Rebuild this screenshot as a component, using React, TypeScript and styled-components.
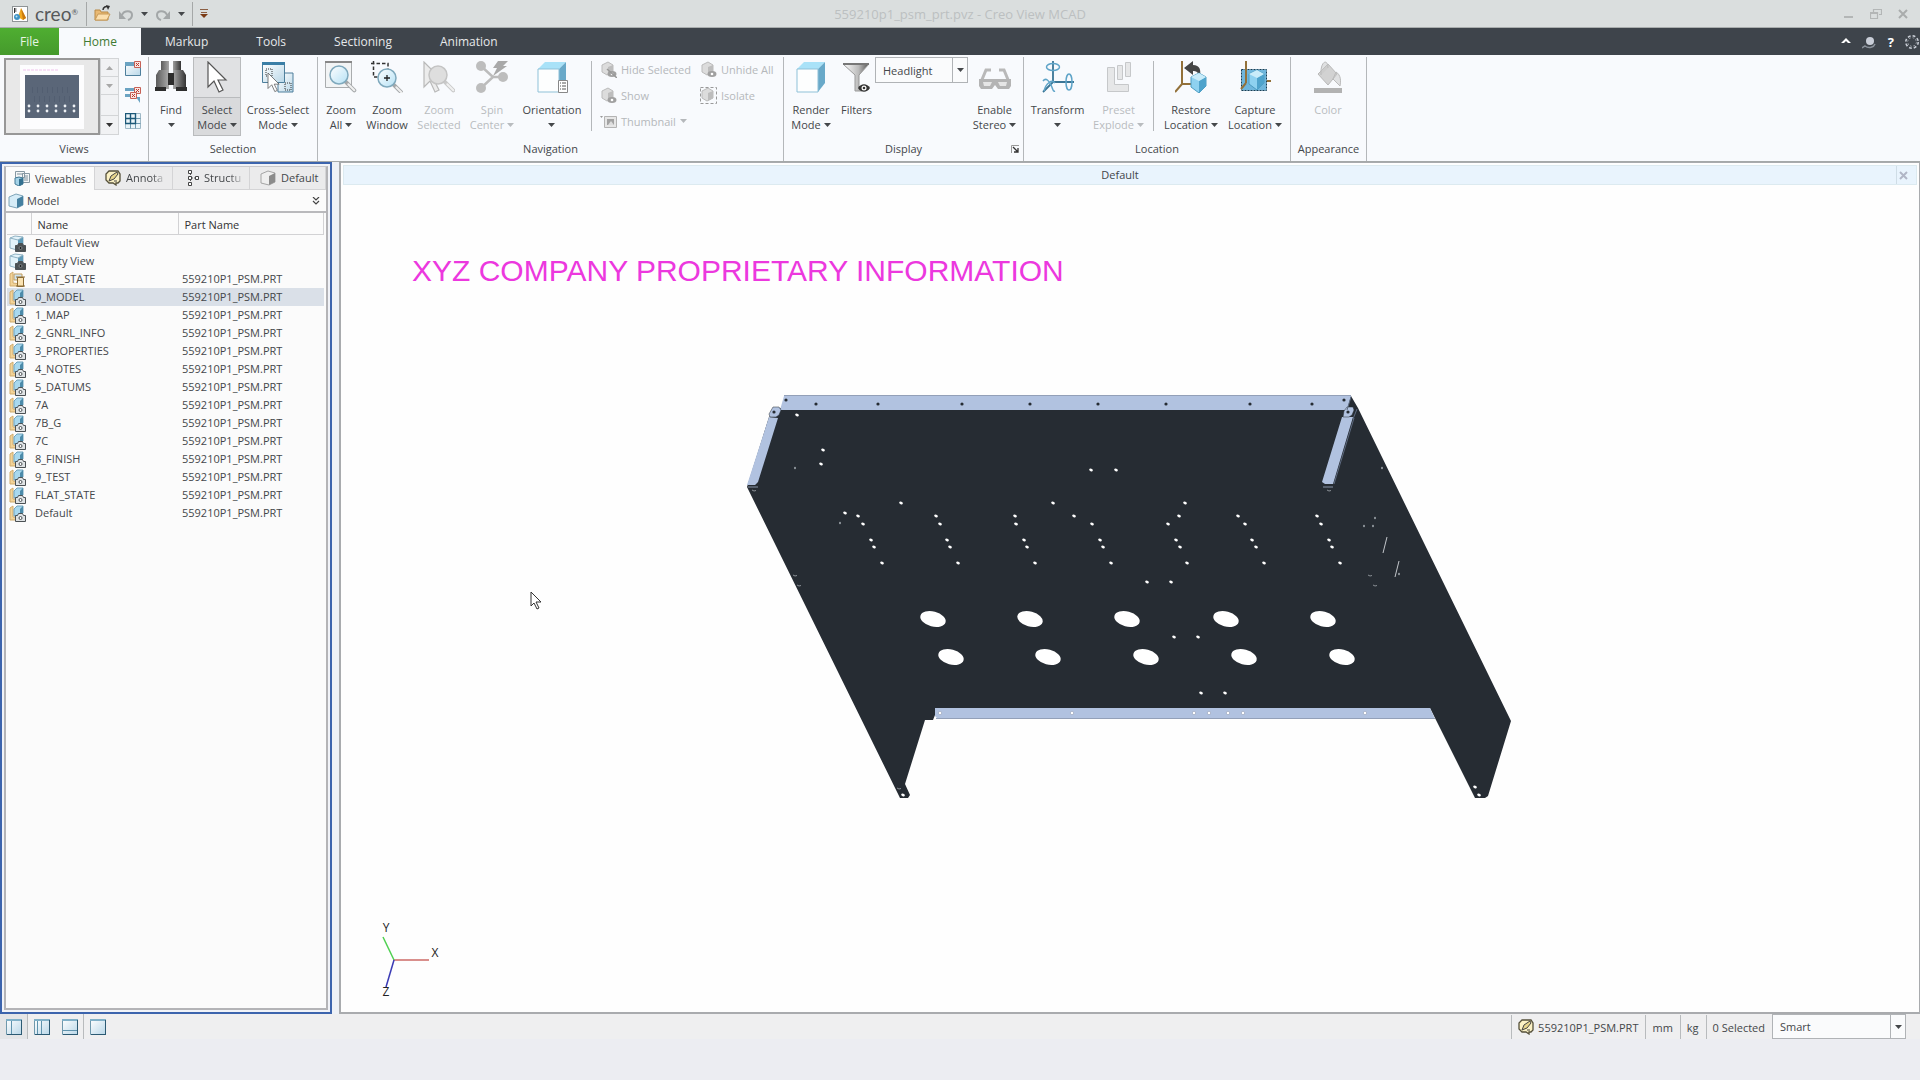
import React, { ReactNode } from "react";
import styled, { createGlobalStyle, css } from "styled-components";

const GlobalStyle = createGlobalStyle`
  *, *::before, *::after { box-sizing: border-box; }
  body { margin: 0; background: #ecedf2; }
  body, button, select { font-family: "Open Sans", "Noto Sans", sans-serif; font-size: 11px; color: #44474a; }
  button { border: 0; background: none; padding: 0; margin: 0; }
  svg { display: block; flex: none; }
`;

const Shell = styled.div`
  min-height: 100vh;
  display: flex;
  flex-direction: column;
  padding-bottom: 41px;
  background: #ecedf2;
`;

/* ---------- title bar ---------- */

const TitleBar = styled.header`
  display: grid;
  grid-template-columns: 1fr auto 1fr;
  align-items: center;
  height: 28px;
  background: #dadede;
  border-bottom: 1px solid #a9adad;
`;
const QuickAccess = styled.div`
  display: flex;
  align-items: center;
  gap: 7px;
  padding-left: 12px;
`;
const Brand = styled.span`
  font-family: "Lato", sans-serif;
  font-size: 19px;
  line-height: 22px;
  color: #56595b;
  width: 44px;
  sup { font-size: 8px; line-height: 8px; vertical-align: 6px; }
`;
const BarRule = styled.span`
  width: 1px;
  height: 24px;
  background: #a5a8a8;
`;
const WindowTitle = styled.div`
  font-size: 13px;
  color: #bcc0c1;
`;
const WindowButtons = styled.div`
  display: flex;
  justify-content: flex-end;
  gap: 15px;
  padding-right: 11px;
  color: #adb0b0;
`;

/* ---------- tab bar ---------- */

const TabBar = styled.nav`
  display: flex;
  align-items: stretch;
  justify-content: space-between;
  height: 27px;
  background: #3e444b;
`;
const TabList = styled.div`
  display: flex;
`;
const RibbonTab = styled.button<{ $kind?: "file" | "active" }>`
  padding: 0 24px;
  font-size: 12px;
  line-height: 26px;
  color: #e6e8ea;
  ${(p) => p.$kind === "file" && css`
    padding: 0 20px;
    color: #e8f5e4;
    background: linear-gradient(#4fae31, #459a2c);
  `}
  ${(p) => p.$kind === "active" && css`
    color: #3f7a33;
    background: #f8fafd;
  `}
`;
const TabTools = styled.div`
  display: flex;
  align-items: center;
  gap: 10px;
  color: #fff;
  b { font-size: 13px; line-height: 20px; }
`;

/* ---------- ribbon ---------- */

const Ribbon = styled.section`
  display: flex;
  background: #f8fafd;
  padding-top: 2px;
  height: 106px;
`;
const Group = styled.div<{ $width: number }>`
  width: ${(p) => p.$width}px;
  display: flex;
  flex-direction: column;
  border-right: 1px solid #b4b7ba;
`;
const GroupBody = styled.div`
  display: flex;
  height: 79px;
`;
const GroupTitle = styled.div`
  display: flex;
  justify-content: center;
  align-items: center;
  flex: 1;
  position: relative;
`;
const Launcher = styled.button`
  position: absolute;
  right: 4px;
  top: 9px;
`;
const Tool = styled.button<{ $width: number; $pressed?: boolean }>`
  width: ${(p) => p.$width}px;
  display: flex;
  flex-direction: column;
  align-items: center;
  padding-top: 4px;
  line-height: 15px;
  white-space: nowrap;
  &:disabled { color: #b9bcbf; }
  ${(p) => p.$pressed && css`
    background: linear-gradient(#e0e1e3 0 40px, #b9bbbd 40px 41px, #d9dadc 41px);
    box-shadow: inset 0 0 0 1px #b9bbbd;
  `}
`;
const ToolText = styled.span`
  display: flex;
  flex-direction: column;
  align-items: center;
  padding-top: 9px;
`;
const ToolLine = styled.span`
  display: flex;
  align-items: center;
  gap: 3px;
  height: 15px;
`;
const Divider = styled.span<{ $margin: string }>`
  width: 1px;
  height: 70px;
  margin: ${(p) => p.$margin};
  background: #b4b7ba;
`;
const SmallTools = styled.div`
  display: grid;
  grid-template-columns: 100px auto;
  grid-template-rows: 24px 28px 24px;
  align-items: center;
`;
const SmallTool = styled.button`
  display: flex;
  align-items: center;
  gap: 4px;
  white-space: nowrap;
  &:disabled { color: #b5b8bb; }
`;
const Combo = styled.span<{ $width: number; $height: number }>`
  display: grid;
  width: ${(p) => p.$width}px;
  height: ${(p) => p.$height}px;
  border: 1px solid #b0b3b6;
  background: #fafbfc;
  > * { grid-area: 1 / 1; }
  select {
    appearance: none;
    border: 0;
    background: none;
    padding: 0 20px 0 7px;
    outline: 0;
    width: 100%;
  }
`;
const ComboArrow = styled.span`
  justify-self: end;
  display: grid;
  place-items: center;
  width: 15px;
  border-left: 1px solid #b0b3b6;
  pointer-events: none;
`;
const Gallery = styled.div`
  display: flex;
  margin: 1px 0 1px 4px;
`;
const GalleryView = styled.button`
  display: grid;
  place-items: center;
  width: 96px;
  border: 2px solid #979797;
  background: #e8e8e8;
`;
const GalleryScroll = styled.div`
  display: grid;
  grid-template-rows: 18px 18px 1fr 18px;
  width: 19px;
  border: 1px solid #d3d5d7;
  background: #f1f2f4;
  button, span { display: grid; place-items: center; border-bottom: 1px solid #d3d5d7; color: #a8a8a8; }
  button:last-child { border-bottom: 0; color: #333; }
`;
const ViewIcons = styled.div`
  display: flex;
  flex-direction: column;
  gap: 10px;
  padding: 4px 0 0 6px;
`;

/* ---------- work area ---------- */

const WorkArea = styled.main`
  flex: 1;
  display: grid;
  grid-template-columns: 332px 1fr;
  gap: 7px;
  border-top: 1px solid #a5a9a9;
  background: #eef1f6;
`;
const Sidebar = styled.aside`
  display: flex;
  border: 2px solid #3c64ad;
  padding: 2px;
  background: #f1f3f8;
`;
const SidebarInner = styled.div`
  flex: 1;
  min-width: 0;
  border: 2px solid #b4b4b7;
  border-top: 1px solid #c9c9cc;
  background: #fbfbfb;
`;
const SideTabs = styled.div`
  display: grid;
  grid-template-columns: 89px 78px 77px 1fr;
  height: 23px;
`;
const SideTab = styled.button<{ $active?: boolean }>`
  display: flex;
  align-items: center;
  gap: 5px;
  padding: 0 0 1px ${(p) => (p.$active ? 8 : 10)}px;
  white-space: nowrap;
  background: ${(p) => (p.$active ? "#fbfbfb" : "#ebebec")};
  border: solid #d4d4d6;
  border-width: ${(p) => (p.$active ? "0 1px 0 0" : "0 1px 1px 0")};
`;
const SideTabText = styled.span<{ $fade?: boolean }>`
  ${(p) => p.$fade && css`mask-image: linear-gradient(to right, #000 70%, transparent 110%);`}
`;
const ModelRow = styled.div`
  display: flex;
  align-items: center;
  gap: 3px;
  height: 23px;
  padding: 0 6px 0 2px;
  border-bottom: 2px solid #b9b9bc;
  button { margin-left: auto; }
`;
const ViewTable = styled.table`
  width: calc(100% - 3px);
  margin-left: 1px;
  border-collapse: collapse;
  table-layout: fixed;
  th {
    height: 21px;
    padding: 3px 6px 0;
    text-align: left;
    font-weight: 400;
    line-height: 15px;
    border: 1px solid #d2d2d4;
    border-width: 0 1px 1px 0;
    color: #333;
  }
  td { height: 18px; padding: 0 4px; line-height: 16px; white-space: nowrap; }
  td:first-child { padding: 0 2px; }
`;
const ViewRow = styled.tr<{ $selected?: boolean }>`
  background: ${(p) => (p.$selected ? "#dae0e8" : "transparent")};
`;
const Viewer = styled.section`
  display: flex;
  flex-direction: column;
  position: relative;
  border: 1px solid #a9abae;
  border-width: 1px 1px 2px 2px;
  background: #fefefe;
`;
const ViewerBar = styled.div`
  display: grid;
  grid-template-columns: 1fr 20px;
  margin: 2px;
  height: 20px;
  background: #e9f4fd;
  border: 1px solid #dceaf0;
  text-align: center;
  line-height: 18px;
  button { border-left: 1px solid #cfdde6; display: grid; align-items: center; padding-left: 2px; color: #b1b6c6; }
`;
const Watermark = styled.h1`
  margin: 67px 0 0 71px;
  font: 400 30px/34px "Liberation Sans", Arial, sans-serif;
  color: #ec38de;
`;
const Model = styled.svg`
  align-self: center;
  margin: 102px 2px 0 0;
`;
const Triad = styled.svg`
  margin: auto 0 12px 31px;
  font-family: "Open Sans", sans-serif;
  font-size: 12px;
`;
const Pointer = styled.svg`
  position: absolute;
  left: 189px;
  top: 428px;
`;

/* ---------- status bar ---------- */

const StatusBar = styled.footer`
  display: flex;
  justify-content: space-between;
  height: 25px;
  background: #efeff0;
  padding-right: 14px;
`;
const StatusSide = styled.div`
  display: flex;
`;
const LayoutButton = styled.button<{ $on?: boolean; $ruled?: boolean }>`
  display: grid;
  place-items: center;
  width: 28px;
  background: ${(p) => (p.$on ? "#e4e5e7" : "transparent")};
  border-right: 1px solid ${(p) => (p.$on || p.$ruled ? "#b8bbbd" : "transparent")};
`;
const StatusCell = styled.span`
  display: flex;
  align-items: center;
  gap: 4px;
  padding: 0 7px 0 6px;
  margin-top: 1px;
  border-left: 1px solid #b8bbbd;
`;

/* ---------- icons ---------- */

const Down = ({ w = 7 }: { w?: number }) => (
  <svg width={w} height="4" viewBox="0 0 7 4"><path d="M0 0h7L3.5 4z" fill="currentColor" /></svg>
);
const Ico = ({ s = 32, children }: { s?: number; children: ReactNode }) => (
  <svg width={s} height={s} viewBox={`0 0 ${s} ${s}`} fill="none">{children}</svg>
);
const Defs = styled.svg`
  position: absolute;
`;
const Gradients = () => (
  <Defs width="0" height="0" aria-hidden="true">
    <defs>
      <linearGradient id="metal"><stop stopColor="#5b5b5b" /><stop offset=".5" stopColor="#b9b9b9" /><stop offset="1" stopColor="#333" /></linearGradient>
      <linearGradient id="lens" x2="1" y2="1"><stop stopColor="#fff" /><stop offset="1" stopColor="#b5e1f5" /></linearGradient>
      <linearGradient id="pane" x2="1" y2="1"><stop stopColor="#fff" /><stop offset="1" stopColor="#b9d7e8" /></linearGradient>
      <linearGradient id="funnel"><stop stopColor="#fff" /><stop offset=".6" stopColor="#bbb" /><stop offset="1" stopColor="#555" /></linearGradient>
    </defs>
  </Defs>
);

const CreoLogo = () => (
  <Ico s={16}>
    <rect x=".5" y=".5" width="15" height="15" fill="#fff" stroke="#8f9496" />
    <path d="M9 2 14 12 11 14 6 11z" fill="#f0a81f" /><path d="M9 2 14 12 11 14z" fill="#c9790e" />
    <path d="M2.5 2v5M2.5 3h2M2.5 5h2" stroke="#333" /><circle cx="5" cy="11" r="3" fill="#3f93c4" /><circle cx="4.5" cy="10.5" r="1" fill="#bfe3f5" />
  </Ico>
);
const FolderOpen = () => (
  <Ico s={17}>
    <path d="M1 15V5h5l1 2h7v8z" fill="#e9b973" stroke="#b98a47" /><path d="M1 15 4 9h12l-3 6z" fill="#fbdfae" stroke="#c79a58" />
    <path d="M9 5c0-3 3-4 5-3" stroke="#333" strokeWidth="1.5" /><path d="M12 0l4 1-2 4z" fill="#333" />
  </Ico>
);
const Undo = ({ flip }: { flip?: boolean }) => (
  <Ico s={16}>
    <g transform={flip ? "translate(16 0) scale(-1 1)" : undefined}>
      <path d="M4 9c2-5 10-5 10 0 0 2-1 4-4 5" stroke="#a3a7a8" strokeWidth="2" /><path d="M1 5v8h7z" fill="#a3a7a8" />
    </g>
  </Ico>
);
const Customize = () => (
  <svg width="8" height="10" viewBox="0 0 8 10"><path d="M0 .5h8M1 3.5h6" stroke="#8b5f43" /><path d="M0 5h8L4 9z" fill="#7a3b16" /></svg>
);
const Binoculars = () => (
  <Ico>
    <path d="M6 0h8v10H6zM18 0h8v10h-8z" fill="url(#metal)" />
    <path d="M4 9h10v19H1V14zM28 9H18v19h13V14z" fill="url(#metal)" />
    <path d="M0 26h11v4H0zM21 26h11v4H21zM13 12h6v12h-6z" fill="#2d2d2d" />
  </Ico>
);
const Arrow = ({ x = 0, y = 0, s = 1, c = "#555", f = "#fff" }) => (
  <path transform={`translate(${x} ${y}) scale(${s})`} d="M0 0v25l6-6 5 11 4-2-5-10h8z" fill={f} stroke={c} strokeWidth="1.2" />
);
const CrossSelect = () => (
  <Ico>
    <path d="M16 12h15v19H16z" fill="url(#pane)" stroke="#4e7f9c" /><path d="M.5 2.5h22v19H.5z" fill="url(#pane)" stroke="#4e7f9c" />
    <path d="M0 1h23v3H0z" fill="#3a7ea6" />
    <path d="M4 8h6v7H4zM23 22h6v7h-6z" stroke="#333" strokeDasharray="1 1" />
    <Arrow x={6} y={12} s={0.62} />
  </Ico>
);
const Lens = ({ x, y, r, grey }: { x: number; y: number; r: number; grey?: boolean }) => (
  <>
    <path d={`M${x + r * 0.7} ${y + r * 0.7}l9 9`} stroke={grey ? "#c9c9c9" : "#a5a8aa"} strokeWidth="4" strokeLinecap="round" />
    <path d={`M${x + r * 0.7 + 3} ${y + r * 0.7 + 3}l6 6`} stroke="#f0f0f0" strokeWidth="2" strokeLinecap="round" />
    <circle cx={x} cy={y} r={r} fill={grey ? "#dedede" : "url(#lens)"} stroke={grey ? "#c4c4c4" : "#7fa9bd"} strokeWidth="1.5" />
  </>
);
const ZoomAll = () => (
  <Ico><path d="M.5 1.5h26v25H.5z" fill="#f2f4f5" stroke="#a9acae" /><path d="M0 1h27" stroke="#888" strokeWidth="2" /><Lens x={14} y={14} r={9} /></Ico>
);
const ZoomWindow = () => (
  <Ico>
    <path d="M2.5 0v16h4M0 2.5h17v6" stroke="#333" strokeWidth="1.5" strokeDasharray="3.5 2" /><Lens x={16} y={17} r={9} />
    <path d="M13 17h6M16 14v6" stroke="#222" strokeWidth="1.3" />
  </Ico>
);
const ZoomSelected = () => <Ico><Arrow x={1} y={1} c="#b9b9b9" f="#ececec" /><Lens x={15} y={14} r={9} grey /></Ico>;
const SpinCenter = () => (
  <Ico>
    <path d="M5 5 17 16 5 27M17 16h10" stroke="#bcbcbc" strokeWidth="2.5" /><g fill="#bdbdbd"><circle cx="5" cy="5" r="5" /><circle cx="5" cy="27" r="5" /><circle cx="27" cy="16" r="5" /></g>
    <path d="M22 0h10l-5 5h4L17 15l4-8h-4z" fill="#a9a9a9" />
  </Ico>
);
const Cube = ({ list }: { list?: boolean }) => (
  <Ico>
    <path d="M2 8 9 1h21l-7 7z" fill="#a9e2f8" /><path d="M23 8l7-7v21l-7 9z" fill="#69a9c9" /><path d="M2 8h21v23H2z" fill="#fdfefe" stroke="#8fc1d8" />
    {list && <><path d="M22.5 19.5h9v12h-9z" fill="#fff" stroke="#888" /><path d="M24 22h1m1 0h4M24 25h1m1 0h4M24 28h1m1 0h4" stroke="#555" /></>}
  </Ico>
);
const Funnel = () => (
  <Ico>
    <path d="M2 3h26L18 14v11l3 5h-7V14z" fill="url(#funnel)" stroke="#999" /><path d="M2 3h26" stroke="#777" strokeWidth="2" />
    <path d="M17 27c3-5 9-5 12 0-3 5-9 5-12 0z" fill="#333" /><circle cx="23" cy="27" r="2.5" fill="#fff" /><circle cx="23" cy="27" r="1.3" fill="#333" />
  </Ico>
);
const Glasses = () => (
  <Ico>
    <path d="M2 21 7 9h5M30 21 25 9h-5" stroke="#b9b9b9" strokeWidth="3" /><path d="M0 18h32v7l-2 3H19l-3-4-3 4H2l-2-3z" fill="#b4b4b4" />
    <path d="M4 21h9l-2 4H5zM19 21h9l-1 4h-6z" fill="#e6e6e6" />
  </Ico>
);
const TransformIcon = () => (
  <Ico>
    <path d="M11 0v21h21M11 21 1 31" stroke="#3a7595" strokeWidth="1.8" />
    <ellipse cx="11" cy="6" rx="6.5" ry="3.5" stroke="#5fa4c8" strokeWidth="1.5" /><ellipse cx="27" cy="21" rx="3" ry="8" stroke="#5fa4c8" strokeWidth="1.5" />
    <path d="M1 20c3-4 6 0 8 4s2 7 4 6M13 22C10 18 4 22 2 30" stroke="#5fa4c8" strokeWidth="1.5" />
  </Ico>
);
const Explode = () => (
  <Ico><path d="M4.5 6.5h7v17h14v7h-21zM14.5 4.5h5v14h-5zM22.5 1.5h5v14h-5z" fill="#e6e7e8" stroke="#c6c8ca" /></Ico>
);
const Gem = ({ x = 0, y = 0 }) => (
  <g transform={`translate(${x} ${y})`}><path d="M0 4 8 0l7 4v9l-7 7-8-6z" fill="#8ed1f0" stroke="#4c9cc2" /><path d="M8 8v12l7-7V4z" fill="#4fa3cc" /><path d="M0 4l8 4 7-4-7-4z" fill="#c9ecfa" /></g>
);
const Restore = () => (
  <Ico>
    <path d="M7 0v23L0 31M7 23h10" stroke="#93713a" strokeWidth="2" /><path d="M9 7 18 0v4c7 0 8 5 7 11-2-4-4-5-7-5v4z" fill="#454545" /><Gem x={16} y={12} />
  </Ico>
);
const Capture = () => (
  <Ico>
    <path d="M2.5 8.5h25v21h-25z" fill="#6fb6dc" stroke="#173c52" strokeDasharray="2 1" /><path d="M7 0v22M2 28l5-6M28 20h4" stroke="#93713a" strokeWidth="2" /><Gem x={10} y={9} />
  </Ico>
);
const Bucket = () => (
  <Ico><path d="M6 13 16 3l9 10-9 11z" fill="#d2d2d2" stroke="#b9b9b9" /><path d="M9 14C8 0 16-3 16 7M24 11c5 3 5 9 4 14l-7-7z" stroke="#bbb" fill="#c6c6c6" fillOpacity=".5" /><path d="M2 27h28v5H2z" fill="#b2b2b2" /></Ico>
);
const GreyCube = ({ mark }: { mark: "eye" | "cut" | "frame" }) => (
  <Ico s={17}>
    <path d="M2 4 8 1l5 3v7l-6 3-5-3z" fill="#dcdcdc" stroke="#bbb" /><path d="M8 6v8l5-3V4z" fill="#bdbdbd" />
    {mark === "frame" && <path d="M.5.5h16v16H.5z" stroke="#999" strokeDasharray="3 2" />}
    {mark !== "frame" && <><ellipse cx="12" cy="13" rx="4.5" ry="3" fill="#a0a0a0" /><circle cx="12" cy="13" r="1.3" fill="#fff" /></>}
    {mark === "cut" && <path d="M7 8l10 9" stroke="#999" strokeWidth="1.5" />}
  </Ico>
);
const ThumbIcon = () => (
  <Ico s={17}><path d="M4.5 3.5h12v11h-12z" fill="#e6e6e6" stroke="#b3b3b3" /><path d="M7 6h7v6H7z" fill="#a3a3a3" /><path d="M8 12l3-4 3 4z" fill="#ddd" /><path d="M0 3h3L1.5 5z" fill="#999" /></Ico>
);
const WindowIcon = ({ kind }: { kind: "close" | "multi" | "grid" }) => (
  <Ico s={16}>
    {kind === "grid" ? (
      <><path d="M.5.5h15v15H.5z" fill="#eaf4f9" stroke="#9fb9c7" /><path d="M.5 5.5h15M.5 10.5h15M5.5.5v15M10.5.5v15" stroke="#6c97ad" /><path d="M.5.5h10v10H.5zM5.5.5v10M.5 5.5h10" stroke="#1c5878" strokeWidth="1.4" /></>
    ) : (
      <><path d="M.5 1.5h15v13H.5z" fill={kind === "close" ? "url(#pane)" : "#f8fafd"} stroke={kind === "close" ? "#4e7f9c" : "none"} />
        <path d={kind === "close" ? "M0 1h16v4H0z" : "M0 1h16v3H0zM0 7h9v3H0zM11 10h4v6"} fill="#6ba3c2" />
        <path d="M9.5.5h6v6h-6z" fill="#fbe5e2" stroke="#c66156" /><path d="M11 2l3 3M14 2l-3 3" stroke="#b8392c" />
        {kind === "multi" && <><path d="M5.5 5.5h6v6h-6z" fill="#fbe5e2" stroke="#c66156" /><path d="M7 7l3 3M10 7l-3 3" stroke="#b8392c" /></>}
      </>
    )}
  </Ico>
);
const MiniModel = () => (
  <svg width="64" height="64" viewBox="0 0 64 64">
    <path d="M0 0h64v64H0z" fill="#fdfdfe" /><path d="M5 10h54v43H5z" fill="#5a6678" />
    <path d="M3 5h36" stroke="#f0c3ec" strokeDasharray="3 1" />
    <path d="M12 25h40M14 34h38" stroke="#525e71" strokeDasharray="1 4" strokeWidth="6" />
    {[9, 18, 27, 36, 45, 54].map((x) => <g key={x} fill="#eef1f5"><circle cx={x} cy="41" r="1.4" /><circle cx={x} cy="46" r="1.4" /></g>)}
  </svg>
);
const SmallCube = ({ grey }: { grey?: boolean }) => (
  <Ico s={16}>
    <path d="M1 4 8 1l7 2v9l-6 3-8-2z" fill={grey ? "#efefef" : "#d6ecf7"} stroke={grey ? "#a5a5a5" : "#7fa4b8"} /><path d="M9 6v9l6-3V3z" fill={grey ? "#8b8b8b" : "#4580a0"} />
  </Ico>
);
const ViewablesIcon = () => (
  <Ico s={16}><path d="M1.5 1.5h9v6h-9zM8.5 3.5h7v9h-7z" fill="#f4f6f7" stroke="#8798a3" /><path d="M3 4h6M10 6h4M10 8h4M10 10h4" stroke="#7f909b" /><path d="M1 8l4-1 4 1v6l-4 2-4-2z" fill="#a5d3e8" stroke="#457b97" /><path d="M5 9v7l4-2V8z" fill="#33708f" /></Ico>
);
const NoteIcon = () => (
  <Ico s={16}><path d="M4 1h9l2 3v7l-2 2h-2v2l-3-2H4l-3-3V4z" fill="#fbf1c4" stroke="#55503a" strokeWidth="1.3" /><path d="M4 11l2-5 6-4 1 2-4 5z" fill="#e6d48b" stroke="#444" /><path d="M9 11h3" stroke="#444" /></Ico>
);
const TreeIcon = () => (
  <Ico s={16}><path d="M7.5 3v10M8 8h5" stroke="#555" strokeDasharray="2 1" /><path d="M5.5.5h3v3h-3zM5.5 6.5h3v3h-3zM5.5 12.5h3v3h-3zM12.5 6.5h3v3h-3z" fill="#fff" stroke="#444" /></Ico>
);
const RowIcon = ({ kind }: { kind: "base" | "flat" | "view" }) => (
  <Ico s={17}>
    {kind === "base" && <><path d="M1 3 6 1l8 1v10l-6 3-7-2z" fill="#e3f3fa" stroke="#8fb2c3" /><path d="M9 5v8l5-3V2z" fill="#5d9ab8" /><path d="M1 3l8 2 5-3" stroke="#8fb2c3" /></>}
    {kind !== "base" && <path d="M1 3 4 1v11l8 1-2 2H1z" fill="#f2d398" stroke="#d0ab6c" />}
    {kind === "view" && <><path d="M5 4 8 1h6v7l-3 3H5z" fill="#a8d8ee" stroke="#6fa3bd" /><path d="M11 4l3-3v7l-3 3z" fill="#4c8baa" /></>}
    {kind === "flat" && <><path d="M5 3h8v6H5z" fill="#cfe3ee" stroke="#c49d5a" /><path d="M8.5 6.5h6v9h-6zM7 6h9M7 15h9" fill="#fae3b3" stroke="#8a6a34" /></>}
    {kind !== "flat" && (
      <>
        <path d="M6.5 10.5h2l1-2h4l1 2h2v6h-10z" fill={kind === "base" ? "#4b5154" : "#dfe3e5"} stroke="#4b5154" />
        <circle cx="11.5" cy="13" r="1.5" fill={kind === "base" ? "#1c1e20" : "#fff"} stroke={kind === "base" ? "#7f8588" : "#4b5154"} />
      </>
    )}
  </Ico>
);
const LayoutIcon = ({ d }: { d: string }) => (
  <Ico s={16}><path d="M.5.5h15v15H.5z" fill="url(#pane)" stroke="#6f98ac" /><path d="M0 1h16" stroke="#7fb0c8" strokeWidth="2" /><path d={d} stroke="#5f93ad" /><path d="M15.5 1v15M1 15.5h15" stroke="#2c5a73" /></Ico>
);

/* ---------- ribbon button ---------- */

type RibbonButtonProps = { icon: ReactNode; lines: string[]; width: number; menu?: boolean; disabled?: boolean; pressed?: boolean };
const RibbonButton = ({ icon, lines, width, menu, disabled, pressed }: RibbonButtonProps) => (
  <Tool $width={width} $pressed={pressed} disabled={disabled} aria-pressed={pressed}>
    {icon}
    <ToolText>
      {lines.map((l, i) => (
        <ToolLine key={l}>{l}{menu && i === 1 && <Down />}</ToolLine>
      ))}
      {menu && lines.length === 1 && <ToolLine><Down /></ToolLine>}
    </ToolText>
  </Tool>
);

/* ---------- model ---------- */

const column = (x: number[]): number[][] => x.map((v, i) => [v, [516, 524, 540, 547, 563][i]]);
const holes: number[][] = [
  [797, 415], [823, 450], [821, 464], [1091, 470], [1116, 470], [901, 503], [1053, 503], [1185, 503], [845, 513],
  ...column([858, 863, 871, 874, 882]), ...column([936, 940, 947, 950, 958]), ...column([1015, 1016, 1024, 1027, 1035]),
  ...column([1074, 1092, 1100, 1103, 1111]), ...column([1179, 1168, 1176, 1180, 1187]), ...column([1238, 1245, 1252, 1256, 1264]),
  ...column([1317, 1321, 1329, 1332, 1340]), [1147, 582], [1171, 582], [1174, 637], [1198, 637], [1201, 693], [1225, 693],
  [1475, 787], [1479, 795], [903, 795],
];
const marks = [[795, 468], [840, 523], [1382, 468], [1375, 518], [1364, 526], [1373, 526], [1399, 574]];
const scuffs = [[795, 575], [799, 585], [1370, 575], [1375, 585], [899, 788], [754, 490], [1329, 490]];
const slots = [[933, 619], [1030, 619], [1127, 619], [1226, 619], [1323, 619], [951, 657], [1048, 657], [1146, 657], [1244, 657], [1342, 657]];
const topHoles = [[786, 400], [816, 404], [878, 404], [962, 404], [1030, 404], [1098, 404], [1166, 404], [1250, 404], [1312, 404], [1344, 400], [774, 412], [1348, 412]];
const lowHoles = [940, 1072, 1194, 1209, 1228, 1243, 1365];

const SheetMetalPart = () => (
  <Model width="778" height="412" viewBox="740 390 778 412" role="img" aria-label="Sheet metal part">
    <path d="M769 417 779 408 1351 396 1358 408 1511 721 1488 796 1485 798H1475L1430 708H935V715L933 720H925L905 784 910 795 908 798H900L747 487z" fill="#262c33" />
    <g fill="#b1c2e0">
      <path d="M784 396h567l-4 14H780zM769 417l9 1-20 64-3 3h-8zM1342 417h11l-20 67h-8l-3-2zM935 708h495l5 11H938l-3-3z" />
      <path d="M773 407h6l2 3-2 5-3 2h-6l-1-3zM1347 407h6l1 3-2 5-3 2h-6l1-6z" stroke="#262c33" strokeWidth=".5" />
    </g>
    <path d="M784 395.5h567M936 718.5h499" stroke="#93a0b8" />
    <path d="M1351 397l-4 13M1357 409l-4 10M1354 418l-20 66" stroke="#5d6a80" fill="none" />
    <path d="M748 487h10M1323 487h10" stroke="#8793a8" />
    <g fill="#262c33">{topHoles.map(([x, y]) => <circle key={x + "-" + y} cx={x} cy={y} r="1.6" />)}</g>
    <g fill="#fff">
      {lowHoles.map((x) => <circle key={x} cx={x} cy="713" r="1.7" stroke="#8693ab" strokeWidth=".5" />)}
      {holes.map(([x, y]) => <ellipse key={x + "-" + y} cx={x} cy={y} rx="1.9" ry="1.3" transform={`rotate(20 ${x} ${y})`} />)}
      {slots.map(([x, y]) => <ellipse key={x + "-" + y} cx={x} cy={y} rx="13" ry="7.5" transform={`rotate(15 ${x} ${y})`} />)}
    </g>
    <g fill="#aab0b6">{marks.map(([x, y]) => <ellipse key={x + "-" + y} cx={x} cy={y} rx=".8" ry="1.2" />)}</g>
    <g stroke="#8a9096" fill="none">{scuffs.map(([x, y]) => <path key={x + "-" + y} d={`M${x - 2} ${y}l2 1 2-.5`} />)}</g>
    <path d="M1387 537l-4 16M1399 561l-4 16" stroke="#c3c7cb" />
  </Model>
);

const PART = "559210P1_PSM.PRT";
const rows = ["Default View", "Empty View", "FLAT_STATE", "0_MODEL", "1_MAP", "2_GNRL_INFO", "3_PROPERTIES", "4_NOTES", "5_DATUMS", "7A", "7B_G", "7C", "8_FINISH", "9_TEST", "FLAT_STATE", "Default"];

export default function App() {
  return (
    <Shell>
      <GlobalStyle />
      <Gradients />
      <TitleBar>
        <QuickAccess>
          <CreoLogo />
          <Brand>creo<sup>®</sup></Brand>
          <BarRule />
          <button aria-label="Open"><FolderOpen /></button>
          <button aria-label="Undo"><Undo /></button>
          <button aria-label="Undo list"><Down /></button>
          <button aria-label="Redo"><Undo flip /></button>
          <button aria-label="Redo list"><Down /></button>
          <BarRule />
          <button aria-label="Customize"><Customize /></button>
        </QuickAccess>
        <WindowTitle>559210p1_psm_prt.pvz - Creo View MCAD</WindowTitle>
        <WindowButtons>
          <button aria-label="Minimize"><Ico s={12}><path d="M1 9h9" stroke="#b3b6b6" strokeWidth="2" /></Ico></button>
          <button aria-label="Restore"><Ico s={12}><path d="M3.5 4V1.5h8v5H9M.5 4.5h7v6h-7zM.5 5.5h7" stroke="#b3b6b6" strokeWidth="1.2" /></Ico></button>
          <button aria-label="Close"><Ico s={12}><path d="M2 2l8 8M10 2l-8 8" stroke="#a9acac" strokeWidth="2" /></Ico></button>
        </WindowButtons>
      </TitleBar>

      <TabBar>
        <TabList>
          <RibbonTab $kind="file">File</RibbonTab>
          <RibbonTab $kind="active">Home</RibbonTab>
          {["Markup", "Tools", "Sectioning", "Animation"].map((t) => <RibbonTab key={t}>{t}</RibbonTab>)}
        </TabList>
        <TabTools>
          <button aria-label="Collapse ribbon"><Ico s={12}><path d="M1 7l5-5 5 5H8L6 5 4 7z" fill="#fff" /></Ico></button>
          <button aria-label="Search"><Ico s={16}><circle cx="8" cy="7" r="4" fill="#c9ced8" /><path d="M0 14l3-2c4 3 9 1 10-2" stroke="#8b929b" strokeWidth="1.5" /></Ico></button>
          <b>?</b>
          <button aria-label="Settings"><Ico s={16}><circle cx="8" cy="8" r="5.5" stroke="#c9ced6" strokeWidth="3" strokeDasharray="2.5 1.8" /><circle cx="8" cy="8" r="5" stroke="#3e444b" /></Ico></button>
        </TabTools>
      </TabBar>

      <Ribbon>
        <Group $width={149}>
          <GroupBody>
            <Gallery>
              <GalleryView aria-label="Current view"><MiniModel /></GalleryView>
              <GalleryScroll>
                <button aria-label="Previous"><svg width="7" height="4"><path d="M0 4h7L3.5 0z" fill="currentColor" /></svg></button>
                <button aria-label="Next"><Down /></button>
                <span />
                <button aria-label="More"><Down w={9} /></button>
              </GalleryScroll>
            </Gallery>
            <ViewIcons><WindowIcon kind="close" /><WindowIcon kind="multi" /><WindowIcon kind="grid" /></ViewIcons>
          </GroupBody>
          <GroupTitle>Views</GroupTitle>
        </Group>
        <Group $width={169}>
          <GroupBody>
            <RibbonButton width={44} icon={<Binoculars />} lines={["Find"]} menu />
            <RibbonButton width={48} icon={<Ico><Arrow x={7} y={1} /></Ico>} lines={["Select", "Mode"]} menu pressed />
            <RibbonButton width={74} icon={<CrossSelect />} lines={["Cross-Select", "Mode"]} menu />
          </GroupBody>
          <GroupTitle>Selection</GroupTitle>
        </Group>
        <Group $width={466}>
          <GroupBody>
            <RibbonButton width={46} icon={<ZoomAll />} lines={["Zoom", "All"]} menu />
            <RibbonButton width={46} icon={<ZoomWindow />} lines={["Zoom", "Window"]} />
            <RibbonButton width={58} icon={<ZoomSelected />} lines={["Zoom", "Selected"]} disabled />
            <RibbonButton width={48} icon={<SpinCenter />} lines={["Spin", "Center"]} menu disabled />
            <RibbonButton width={72} icon={<Cube list />} lines={["Orientation"]} menu />
            <Divider $margin="4px 8px 0 3px" />
            <SmallTools>
              <SmallTool disabled><GreyCube mark="cut" />Hide Selected</SmallTool>
              <SmallTool disabled><GreyCube mark="eye" />Unhide All</SmallTool>
              <SmallTool disabled><GreyCube mark="eye" />Show</SmallTool>
              <SmallTool disabled><GreyCube mark="frame" />Isolate</SmallTool>
              <SmallTool disabled><ThumbIcon />Thumbnail <Down /></SmallTool>
            </SmallTools>
          </GroupBody>
          <GroupTitle>Navigation</GroupTitle>
        </Group>
        <Group $width={240}>
          <GroupBody>
            <RibbonButton width={54} icon={<Cube />} lines={["Render", "Mode"]} menu />
            <RibbonButton width={37} icon={<Funnel />} lines={["Filters"]} />
            <Combo $width={93} $height={26}>
              <select aria-label="Lighting" defaultValue="Headlight"><option>Headlight</option></select>
              <ComboArrow><Down /></ComboArrow>
            </Combo>
            <RibbonButton width={53} icon={<Glasses />} lines={["Enable", "Stereo"]} menu />
          </GroupBody>
          <GroupTitle>
            Display
            <Launcher aria-label="Display settings"><Ico s={8}><path d="M.5 8V.5H8" stroke="#999" /><path d="M2 2l5 5M7 3v4H3" stroke="#333" strokeWidth="1.3" /></Ico></Launcher>
          </GroupTitle>
        </Group>
        <Group $width={267}>
          <GroupBody>
            <RibbonButton width={67} icon={<TransformIcon />} lines={["Transform"]} menu />
            <RibbonButton width={55} icon={<Explode />} lines={["Preset", "Explode"]} menu disabled />
            <Divider $margin="4px 5px 0 7px" />
            <RibbonButton width={64} icon={<Restore />} lines={["Restore", "Location"]} menu />
            <RibbonButton width={64} icon={<Capture />} lines={["Capture", "Location"]} menu />
          </GroupBody>
          <GroupTitle>Location</GroupTitle>
        </Group>
        <Group $width={76}>
          <GroupBody>
            <RibbonButton width={74} icon={<Bucket />} lines={["Color"]} disabled />
          </GroupBody>
          <GroupTitle>Appearance</GroupTitle>
        </Group>
      </Ribbon>

      <WorkArea>
        <Sidebar>
          <SidebarInner>
            <SideTabs role="tablist">
              <SideTab $active role="tab" aria-selected="true"><ViewablesIcon /><SideTabText>Viewables</SideTabText></SideTab>
              <SideTab role="tab"><NoteIcon /><SideTabText $fade>Annota</SideTabText></SideTab>
              <SideTab role="tab"><TreeIcon /><SideTabText $fade>Structu</SideTabText></SideTab>
              <SideTab role="tab"><SmallCube grey /><SideTabText>Default</SideTabText></SideTab>
            </SideTabs>
            <ModelRow>
              <SmallCube />Model
              <button aria-label="Expand"><Ico s={8}><path d="M1 0l3 3 3-3M1 4l3 3 3-3" stroke="#444" strokeWidth="1.2" /></Ico></button>
            </ModelRow>
            <ViewTable>
              <colgroup><col style={{ width: 24 }} /><col style={{ width: 147 }} /><col /></colgroup>
              <thead><tr><th aria-label="Type" /><th>Name</th><th>Part Name</th></tr></thead>
              <tbody>
                {rows.map((name, i) => (
                  <ViewRow key={i} $selected={i === 3}>
                    <td><RowIcon kind={i < 2 ? "base" : i === 2 ? "flat" : "view"} /></td>
                    <td>{name}</td>
                    <td>{i > 1 && PART}</td>
                  </ViewRow>
                ))}
              </tbody>
            </ViewTable>
          </SidebarInner>
        </Sidebar>

        <Viewer>
          <ViewerBar>
            <span>Default</span>
            <button aria-label="Close view"><Ico s={9}><path d="M1 1l7 7M8 1L1 8" stroke="currentColor" strokeWidth="2" /></Ico></button>
          </ViewerBar>
          <Watermark>XYZ COMPANY PROPRIETARY INFORMATION</Watermark>
          <SheetMetalPart />
          <Triad width="72" height="80" viewBox="372 920 72 80" role="img" aria-label="Axes">
            <path d="M394 960h35" stroke="#d98f8c" strokeWidth="2" />
            <path d="M394 960l-11-23" stroke="#4fd051" strokeWidth="1.5" />
            <path d="M394 960l-8 27" stroke="#3b3bb5" strokeWidth="1.5" />
            <g fill="#222" textAnchor="middle"><text x="386" y="932">Y</text><text x="435" y="957">X</text><text x="386" y="996">Z</text></g>
          </Triad>
          <Pointer width="12" height="20" viewBox="0 0 12 20"><path d="M1 1v14l3-3 3 6 2-1-3-6h5z" fill="#fff" stroke="#333" /></Pointer>
        </Viewer>
      </WorkArea>

      <StatusBar>
        <StatusSide>
          <LayoutButton $on aria-label="Left panel"><LayoutIcon d="M5.5 2v13" /></LayoutButton>
          <LayoutButton aria-label="Two panels"><LayoutIcon d="M3.5 2v13M7.5 2v13" /></LayoutButton>
          <LayoutButton $ruled aria-label="Bottom panel"><LayoutIcon d="M1 11.5h14" /></LayoutButton>
          <LayoutButton aria-label="Full view"><LayoutIcon d="" /></LayoutButton>
        </StatusSide>
        <StatusSide>
          <StatusCell><NoteIcon />{PART}</StatusCell>
          <StatusCell>mm</StatusCell>
          <StatusCell>kg</StatusCell>
          <StatusCell>0 Selected</StatusCell>
          <Combo $width={134} $height={25}>
            <select aria-label="Selection filter" defaultValue="Smart"><option>Smart</option></select>
            <ComboArrow><Down /></ComboArrow>
          </Combo>
        </StatusSide>
      </StatusBar>
    </Shell>
  );
}
